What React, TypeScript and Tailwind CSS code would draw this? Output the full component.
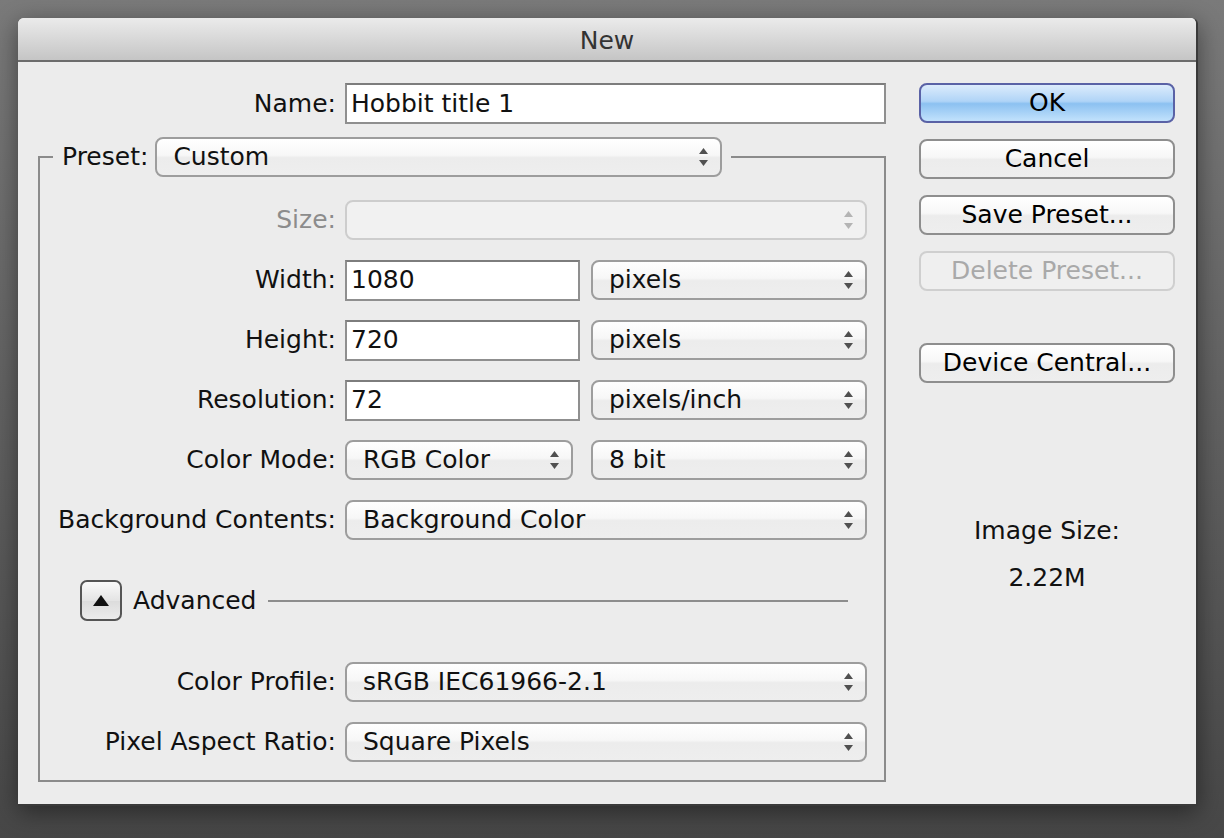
import React from 'react';

const selectBg =
  'bg-[linear-gradient(to_bottom,#ffffff_0%,#f7f7f7_45%,#ececec_52%,#eeeeee_100%)]';

function Arrows({ disabled }: { disabled?: boolean }) {
  const fill = disabled ? '#b4b4b4' : '#505050';
  return (
    <svg width="9" height="18" viewBox="0 0 9 18" className="shrink-0">
      <polygon points="4.5,0 9,6 0,6" fill={fill} />
      <polygon points="0,12 9,12 4.5,18" fill={fill} />
    </svg>
  );
}

function Select({
  value,
  className,
  disabled,
}: {
  value?: string;
  className: string;
  disabled?: boolean;
}) {
  return (
    <div
      className={`${className} h-[40px] flex items-center justify-between rounded-[8px] border-2 pl-[16px] pr-[12px] ${
        disabled ? 'border-[#cdcdcd] bg-[#f1f1f1]' : `border-[#9d9d9d] ${selectBg}`
      }`}
    >
      <span className="whitespace-nowrap">{value}</span>
      <Arrows disabled={disabled} />
    </div>
  );
}

function Input({ value, className }: { value: string; className: string }) {
  return (
    <div
      className={`${className} h-[41px] flex items-center border-2 border-[#8f8f8f] border-t-[#7d7d7d] bg-white pl-[4px]`}
    >
      {value}
    </div>
  );
}

function Row({
  label,
  children,
  disabled,
}: {
  label: string;
  children: React.ReactNode;
  disabled?: boolean;
}) {
  return (
    <div className="flex items-center gap-[9px] h-[40px]">
      <div className={`w-[296px] text-right whitespace-nowrap ${disabled ? 'text-[#8c8c8c]' : ''}`}>
        {label}
      </div>
      {children}
    </div>
  );
}

function Button({
  children,
  primary,
  disabled,
  className = '',
}: {
  children: React.ReactNode;
  primary?: boolean;
  disabled?: boolean;
  className?: string;
}) {
  let look = `border-[#8e8e8e] ${selectBg} text-black`;
  if (primary)
    look =
      'border-[#5a62a6] bg-[linear-gradient(to_bottom,#dcecfc_0%,#b0d4f7_45%,#8cc1f1_52%,#c2e2fc_100%)] text-black';
  if (disabled) look = 'border-[#cfcfcf] bg-[#efefef] text-[#a9a9a9]';
  return (
    <div
      className={`${className} w-[256px] h-[40px] rounded-[8px] border-2 flex items-center justify-center ${look}`}
    >
      {children}
    </div>
  );
}

export default function App() {
  return (
    <div className="w-[1224px] h-[838px] overflow-hidden pt-[18px] pl-[18px] bg-[linear-gradient(to_bottom,#7a7a7a_0%,#5e5e5e_55%,#474747_100%)] font-['DejaVu_Sans',sans-serif] text-[25px] leading-[30px] text-[#111]">
      <div className="w-[1180px] h-[788px] flex flex-col rounded-t-[6px] border-r-2 border-b-2 border-[#3a3a3a] shadow-[0_6px_24px_rgba(0,0,0,0.45)] bg-[#ececec]">
        {/* title bar */}
        <div className="h-[44px] shrink-0 pt-[4px] rounded-t-[6px] border-b-2 border-[#6c6c6c] bg-[linear-gradient(to_bottom,#ebebeb,#c5c5c5)] flex items-center justify-center text-[#333]">
          New
        </div>

        <div className="flex flex-1 pt-[21px]">
          {/* left: form */}
          <div className="w-[868px] shrink-0">
            <div className="flex items-center gap-[9px] h-[41px]">
              <div className="w-[318px] text-right">Name:</div>
              <Input value="Hobbit title 1" className="w-[541px]" />
            </div>

            <fieldset className="mt-[13px] ml-[20px] w-[848px] border-2 border-[#8b8b8b] pt-[23px] pb-[18px] pr-[17px]">
              <legend className="ml-[13px] px-[9px]">
                <div className="flex items-center gap-[7px] h-[40px]">
                  <span>Preset:</span>
                  <Select value="Custom" className="w-[567px]" />
                </div>
              </legend>

              <div className="flex flex-col gap-[20px]">
                <Row label="Size:" disabled>
                  <Select className="w-[522px]" disabled />
                </Row>
                <Row label="Width:">
                  <Input value="1080" className="w-[235px] h-[40px]" />
                  <Select value="pixels" className="ml-[2px] w-[276px]" />
                </Row>
                <Row label="Height:">
                  <Input value="720" className="w-[235px] h-[40px]" />
                  <Select value="pixels" className="ml-[2px] w-[276px]" />
                </Row>
                <Row label="Resolution:">
                  <Input value="72" className="w-[235px] h-[40px]" />
                  <Select value="pixels/inch" className="ml-[2px] w-[276px]" />
                </Row>
                <Row label="Color Mode:">
                  <Select value="RGB Color" className="w-[228px]" />
                  <Select value="8 bit" className="ml-[9px] w-[276px]" />
                </Row>
                <Row label="Background Contents:">
                  <Select value="Background Color" className="w-[522px]" />
                </Row>
              </div>

              <div className="mt-[40px] h-[41px] flex items-center pl-[40px] pr-[19px]">
                <div className="w-[42px] h-[41px] rounded-[7px] border-2 border-[#555] bg-[linear-gradient(to_bottom,#fafafa,#e4e4e4_50%,#dcdcdc_52%,#ececec)] flex items-center justify-center">
                  <svg width="16" height="11" viewBox="0 0 16 11">
                    <polygon points="8,0 16,11 0,11" fill="#111" />
                  </svg>
                </div>
                <span className="ml-[11px]">Advanced</span>
                <div className="ml-[11px] flex-1 h-[2px] bg-[#8d8d8d]" />
              </div>

              <div className="mt-[41px] flex flex-col gap-[20px]">
                <Row label="Color Profile:">
                  <Select value="sRGB IEC61966-2.1" className="w-[522px]" />
                </Row>
                <Row label="Pixel Aspect Ratio:">
                  <Select value="Square Pixels" className="w-[522px]" />
                </Row>
              </div>
            </fieldset>
          </div>

          {/* right: buttons */}
          <div className="ml-[33px] w-[256px] flex flex-col">
            <Button primary>OK</Button>
            <Button className="mt-[16px]">Cancel</Button>
            <Button className="mt-[16px]">Save Preset...</Button>
            <Button className="mt-[16px]" disabled>
              Delete Preset...
            </Button>
            <Button className="mt-[52px]">Device Central...</Button>
            <div className="mt-[133px] text-center">Image Size:</div>
            <div className="mt-[17px] text-center">2.22M</div>
          </div>
        </div>
      </div>
    </div>
  );
}
